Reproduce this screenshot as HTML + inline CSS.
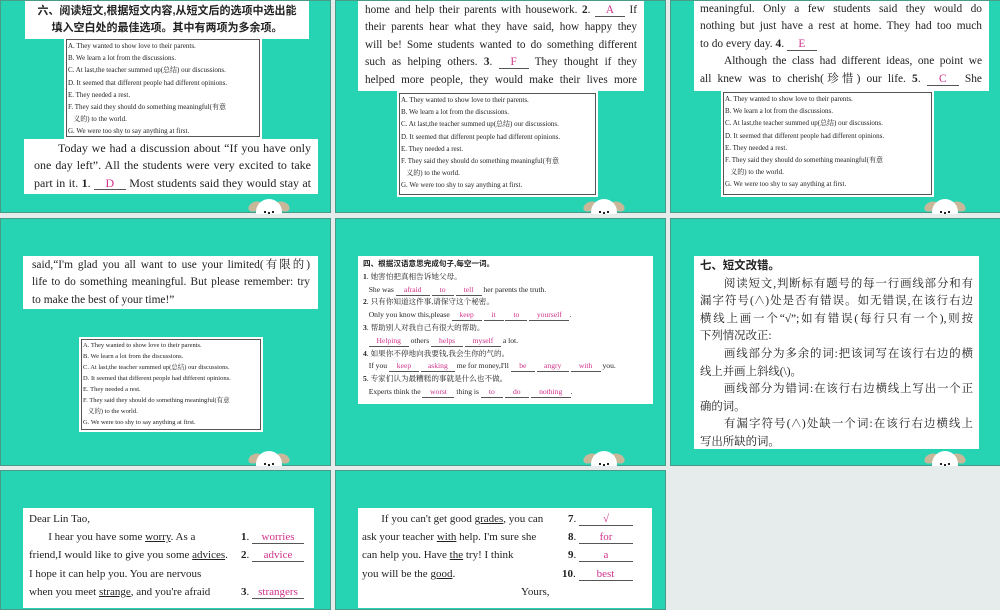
<!DOCTYPE html>
<html><head><meta charset="utf-8"><style>
*{margin:0;padding:0;box-sizing:border-box}
body{width:1000px;height:600px;background:#e6eceb;position:relative;overflow:hidden;font-family:"Liberation Serif","Noto Serif CJK SC",serif;color:#222}
.s{position:absolute;background:#26d4b4;border:1px solid #4a9a88}
.w{position:absolute;background:#fff}
.p{font-size:12px;line-height:17.4px}
.j{text-align:justify;text-align-last:justify;white-space:nowrap}
.jl{white-space:nowrap}
.o{position:absolute;background:#fff;padding:2px}
.o div.in{border:1px solid #555;font-size:7px;line-height:12.2px;padding-left:1px;height:100%;white-space:nowrap;overflow:hidden}
.a{color:#d0308a;display:inline-block;border-bottom:1px solid #555;text-align:center;line-height:11px;text-align-last:center}
.dog{position:absolute;width:44px;height:18px;overflow:hidden}
.dog .e1,.dog .e2{position:absolute;width:14px;height:9px;background:#c9b79a;border-radius:50%;top:6px}
.dog .e1{left:1px;transform:rotate(-25deg)}.dog .e2{right:1px;transform:rotate(25deg)}
.dog .h{position:absolute;left:9px;top:3px;width:26px;height:26px;background:#fff;border-radius:50%}
.dog .h:before{content:"";position:absolute;left:8px;top:12px;width:2px;height:2px;background:#222;box-shadow:4px 1px #222,8px 0 #222}
.cn{font-family:"Liberation Sans","Noto Sans CJK SC",sans-serif}
.f{font-size:7.6px;line-height:12.8px}
.m{font-size:11px;line-height:18.2px;white-space:nowrap}
.ind{padding-left:24px}
</style></head><body>

<!-- slide 1 -->
<div class="s" style="left:0;top:0;width:331px;height:213px">
 <div class="w cn" style="left:24px;top:0;width:284px;height:38px;font-size:11px;line-height:17px;font-weight:bold;text-align:center;padding-top:2px">六、阅读短文,根据短文内容,从短文后的选项中选出能<br>填入空白处的最佳选项。其中有两项为多余项。</div>
 <div class="o" style="left:63px;top:36px;width:198px;height:102px"><div class="in">A. They wanted to show love to their parents.<br>B. We learn a lot from the discussions.<br>C. At last,the teacher summed up(总结) our discussions.<br>D. It seemed that different people had different opinions.<br>E. They needed a rest.<br>F. They said they should do something meaningful(有意<br>&nbsp;&nbsp;&nbsp;义的) to the world.<br>G. We were too shy to say anything at first.</div></div>
 <div class="w p" style="left:23px;top:138px;width:294px;height:55px;padding:1px 7px 0 10px">
  <div class="j ind">Today we had a discussion about “If you have only</div>
  <div class="j">one day left”. All the students were very excited to take</div>
  <div class="j">part in it. <b>1</b>. <span class="a" style="width:32px">D</span> Most students said they would stay at</div>
 </div>
 <div class="dog" style="left:246px;top:195px"><div class="e1"></div><div class="e2"></div><div class="h"></div></div>
</div>

<!-- slide 2 -->
<div class="s" style="left:335px;top:0;width:331px;height:213px">
 <div class="w p" style="left:22px;top:0;width:286px;height:90px;padding:1px 7px 0 7px;font-size:11.2px">
  <div class="j">home and help their parents with housework. <b>2</b>. <span class="a" style="width:30px">A</span> If</div>
  <div class="j">their parents hear what they have said, how happy they</div>
  <div class="j">will be! Some students wanted to do something different</div>
  <div class="j">such as helping others. <b>3</b>. <span class="a" style="width:30px">F</span> They thought if they</div>
  <div class="j">helped more people, they would make their lives more</div>
 </div>
 <div class="o" style="left:61px;top:90px;width:201px;height:106px"><div class="in">A. They wanted to show love to their parents.<br>B. We learn a lot from the discussions.<br>C. At last,the teacher summed up(总结) our discussions.<br>D. It seemed that different people had different opinions.<br>E. They needed a rest.<br>F. They said they should do something meaningful(有意<br>&nbsp;&nbsp;&nbsp;义的) to the world.<br>G. We were too shy to say anything at first.</div></div>
 <div class="dog" style="left:246px;top:195px"><div class="e1"></div><div class="e2"></div><div class="h"></div></div>
</div>

<!-- slide 3 -->
<div class="s" style="left:670px;top:0;width:331px;height:213px">
 <div class="w p" style="left:23px;top:0;width:295px;height:90px;padding:0 7px 0 6px;font-size:11.4px">
  <div class="j">meaningful. Only a few students said they would do</div>
  <div class="j">nothing but just have a rest at home. They had too much</div>
  <div class="jl">to do every day. <b>4</b>. <span class="a" style="width:30px">E</span></div>
  <div class="j ind">Although the class had different ideas, one point we</div>
  <div class="j">all knew was to cherish(珍惜) our life. <b>5</b>. <span class="a" style="width:32px">C</span> She</div>
 </div>
 <div class="o" style="left:50px;top:89px;width:213px;height:107px"><div class="in">A. They wanted to show love to their parents.<br>B. We learn a lot from the discussions.<br>C. At last,the teacher summed up(总结) our discussions.<br>D. It seemed that different people had different opinions.<br>E. They needed a rest.<br>F. They said they should do something meaningful(有意<br>&nbsp;&nbsp;&nbsp;义的) to the world.<br>G. We were too shy to say anything at first.</div></div>
 <div class="dog" style="left:252px;top:195px"><div class="e1"></div><div class="e2"></div><div class="h"></div></div>
</div>

<!-- slide 4 -->
<div class="s" style="left:0;top:218px;width:331px;height:248px">
 <div class="w p" style="left:22px;top:37px;width:295px;height:53px;padding:1px 8px 0 9px;font-size:11.4px">
  <div class="j">said,“I'm glad you all want to use your limited(有限的)</div>
  <div class="j">life to do something meaningful. But please remember: try</div>
  <div class="jl">to make the best of your time!”</div>
 </div>
 <div class="o" style="left:78px;top:118px;width:184px;height:95px"><div class="in" style="font-size:6.5px;line-height:11px">A. They wanted to show love to their parents.<br>B. We learn a lot from the discussions.<br>C. At last,the teacher summed up(总结) our discussions.<br>D. It seemed that different people had different opinions.<br>E. They needed a rest.<br>F. They said they should do something meaningful(有意<br>&nbsp;&nbsp;&nbsp;义的) to the world.<br>G. We were too shy to say anything at first.</div></div>
 <div class="dog" style="left:246px;top:229px"><div class="e1"></div><div class="e2"></div><div class="h"></div></div>
</div>

<!-- slide 5 -->
<div class="s" style="left:335px;top:218px;width:331px;height:248px">
 <div class="w f" style="left:22px;top:37px;width:295px;height:148px;padding:2px 5px;white-space:nowrap">
  <b class="cn">四、根据汉语意思完成句子,每空一词。</b><br>
  <b>1</b>. 她害怕把真相告诉她父母。<br>
  &nbsp;&nbsp;&nbsp;She was <span class="a" style="width:34px">afraid</span> <span class="a" style="width:22px">to</span> <span class="a" style="width:26px">tell</span> her parents the truth.<br>
  <b>2</b>. 只有你知道这件事,请保守这个秘密。<br>
  &nbsp;&nbsp;&nbsp;Only you know this,please <span class="a" style="width:30px">keep</span> <span class="a" style="width:20px">it</span> <span class="a" style="width:22px">to</span> <span class="a" style="width:40px">yourself</span>.<br>
  <b>3</b>. 帮助别人对我自己有很大的帮助。<br>
  &nbsp;&nbsp;&nbsp;<span class="a" style="width:40px">Helping</span> others <span class="a" style="width:32px">helps</span> <span class="a" style="width:36px">myself</span> a lot.<br>
  <b>4</b>. 如果你不停地向我要钱,我会生你的气的。<br>
  &nbsp;&nbsp;&nbsp;If you <span class="a" style="width:30px">keep</span> <span class="a" style="width:34px">asking</span> me for money,I'll <span class="a" style="width:24px">be</span> <span class="a" style="width:32px">angry</span> <span class="a" style="width:30px">with</span> you.<br>
  <b>5</b>. 专家们认为最糟糕的事就是什么也不做。<br>
  &nbsp;&nbsp;&nbsp;Experts think the <span class="a" style="width:32px">worst</span> thing is <span class="a" style="width:22px">to</span> <span class="a" style="width:24px">do</span> <span class="a" style="width:40px">nothing</span>.
 </div>
 <div class="dog" style="left:246px;top:229px"><div class="e1"></div><div class="e2"></div><div class="h"></div></div>
</div>

<!-- slide 6 -->
<div class="s" style="left:670px;top:218px;width:331px;height:248px">
 <div class="w" style="left:23px;top:37px;width:285px;height:193px;padding:2px 6px;font-size:11.4px;line-height:17.6px">
  <div class="jl"><b class="cn">七、短文改错。</b></div>
  <div class="j ind">阅读短文,判断标有题号的每一行画线部分和有</div>
  <div class="j">漏字符号(∧)处是否有错误。如无错误,在该行右边</div>
  <div class="j">横线上画一个“√”;如有错误(每行只有一个),则按</div>
  <div class="jl">下列情况改正:</div>
  <div class="j ind">画线部分为多余的词:把该词写在该行右边的横</div>
  <div class="jl">线上并画上斜线(\)。</div>
  <div class="j ind">画线部分为错词:在该行右边横线上写出一个正</div>
  <div class="jl">确的词。</div>
  <div class="j ind">有漏字符号(∧)处缺一个词:在该行右边横线上</div>
  <div class="jl">写出所缺的词。</div>
 </div>
 <div class="dog" style="left:252px;top:229px"><div class="e1"></div><div class="e2"></div><div class="h"></div></div>
</div>

<!-- slide 7 -->
<div class="s" style="left:0;top:470px;width:331px;height:140px">
 <div class="w m" style="left:22px;top:37px;width:291px;height:100px;padding:2px 6px">
  Dear Lin Tao,<br>
  &nbsp;&nbsp;&nbsp;&nbsp;&nbsp;&nbsp;&nbsp;I hear you have some <u>worry</u>. As a<span style="position:absolute;left:218px"><b>1</b>. <span class="a" style="width:52px">worries</span></span><br>
  friend,I would like to give you some <u>advices</u>.<span style="position:absolute;left:218px"><b>2</b>. <span class="a" style="width:52px">advice</span></span><br>
  I hope it can help you. You are nervous<br>
  when you meet <u>strange</u>, and you're afraid<span style="position:absolute;left:218px"><b>3</b>. <span class="a" style="width:52px">strangers</span></span>
 </div>
</div>

<!-- slide 8 -->
<div class="s" style="left:335px;top:470px;width:331px;height:140px">
 <div class="w m" style="left:22px;top:37px;width:294px;height:100px;padding:2px 4px">
  &nbsp;&nbsp;&nbsp;&nbsp;&nbsp;&nbsp;&nbsp;If you can't get good <u>grades</u>, you can<span style="position:absolute;left:210px"><b>7</b>. <span class="a" style="width:54px">√</span></span><br>
  ask your teacher <u>with</u> help. I'm sure she<span style="position:absolute;left:210px"><b>8</b>. <span class="a" style="width:54px">for</span></span><br>
  can help you. Have <u>the</u> try! I think<span style="position:absolute;left:210px"><b>9</b>. <span class="a" style="width:54px">a</span></span><br>
  you will be the <u>good</u>.<span style="position:absolute;left:204px"><b>10</b>. <span class="a" style="width:54px">best</span></span><br>
  <span style="position:absolute;left:163px">Yours,</span>
 </div>
</div>

</body></html>
